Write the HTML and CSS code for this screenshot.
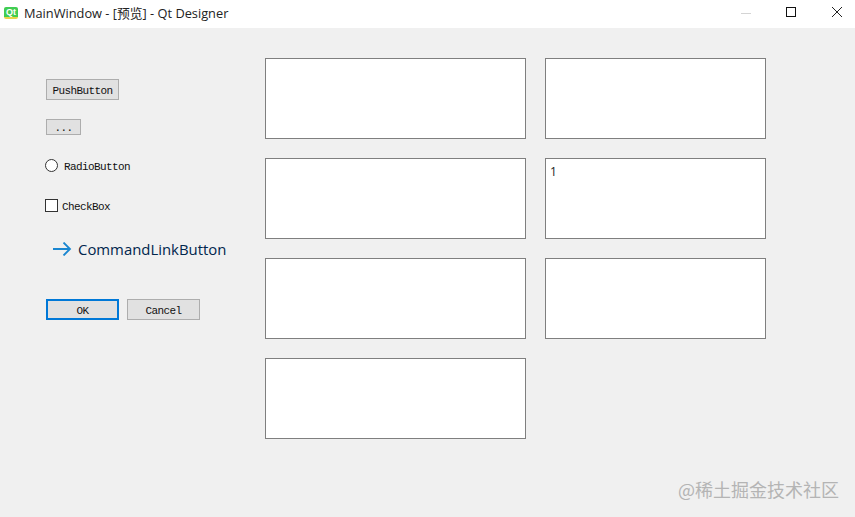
FILE: index.html

```html
<!DOCTYPE html>
<html lang="zh">
<head>
  <meta charset="UTF-8">
  <title>MainWindow - [预览] - Qt Designer</title>
  <meta name="viewport" content="width=device-width, initial-scale=1">
  <link rel="stylesheet" href="styles.css">
</head>
<body>
  <div class="titlebar">
    <div class="app-icon">Qt</div>
    <div class="title">MainWindow - [预览] - Qt Designer</div>
    <div class="win-btns">
      <svg class="win-btn" width="45" height="28" viewBox="0 0 45 28"><path d="M21 13.5h10" stroke="#d4d4d4" fill="none"/></svg>
      <svg class="win-btn" width="45" height="28" viewBox="0 0 45 28"><rect x="21.5" y="7.5" width="9" height="9" stroke="#111" fill="none"/></svg>
      <svg class="win-btn" width="45" height="28" viewBox="0 0 45 28"><path d="M22 7l10 10M32 7L22 17" stroke="#222" fill="none"/></svg>
    </div>
  </div>

  <div class="main">
    <div class="controls">
      <button class="btn push">PushButton</button>
      <button class="btn tool">...</button>
      <div class="opt radio-row"><span class="radio"></span><span class="opt-text">RadioButton</span></div>
      <div class="opt check-row"><span class="check"></span><span class="opt-text">CheckBox</span></div>
      <div class="cmdlink">
        <svg width="19" height="14" viewBox="0 0 19 14"><path d="M0 7h17M10.500 .5l6.500 6.500-6.500 6.500" stroke="#1a86d0" stroke-width="1.8" fill="none"/></svg>
        <span>CommandLinkButton</span>
      </div>
      <div class="dialog-btns">
        <button class="btn default">OK</button>
        <button class="btn">Cancel</button>
      </div>
    </div>

    <div class="boxes">
      <div class="box"></div>
      <div class="box"></div>
      <div class="box"></div>
      <div class="box">1</div>
      <div class="box"></div>
      <div class="box"></div>
      <div class="box"></div>
    </div>
  </div>

  <div class="watermark">@稀土掘金技术社区</div>
</body>
</html>
```

FILE: styles.css

```css
html, body {
  margin: 0;
  padding: 0;
}
body {
  position: relative;
  width: 855px;
  height: 517px;
  overflow: hidden;
  background-color: #f0f0f0;
  font-family: "Liberation Mono", monospace;
}
.titlebar {
  display: flex;
  height: 28px;
  background-color: #fff;
}
.app-icon {
  width: 14px;
  height: 12px;
  margin-top: 7px;
  margin-left: 4px;
  margin-right: 6px;
  border-radius: 2px;
  background: linear-gradient(#41cd52 80%, #e8d44a 80%);
  color: #fff;
  font: bold 9px/10px "Liberation Sans", sans-serif;
  text-align: center;
}
.title {
  padding-top: 3px;
  font: 12.8px "Open Sans", "Noto Sans CJK SC", sans-serif;
  color: #222;
}
.win-btns {
  display: flex;
  margin-left: auto;
}
.win-btn {
  display: block;
}
.main {
  display: flex;
  padding-top: 30px;
}
.controls {
  display: flex;
  flex-direction: column;
  align-items: flex-start;
  box-sizing: border-box;
  width: 265px;
  padding-top: 21px;
  padding-left: 46px;
}
.btn {
  box-sizing: border-box;
  width: 73px;
  height: 21px;
  padding: 2px 0 0;
  background-color: #e1e1e1;
  border: 1px solid #adadad;
  border-radius: 0;
  color: #111;
  font-family: "Liberation Mono", monospace;
  font-size: 11px;
  letter-spacing: -0.6px;
}
.tool {
  width: 35px;
  height: 16px;
  margin-top: 19px;
}
.default {
  border: 2px solid #0078d7;
}
.opt {
  display: flex;
  align-items: center;
  height: 13px;
  margin-left: -1px;
  color: #111;
  font-size: 11px;
  letter-spacing: -0.6px;
}
.opt-text {
  padding-top: 2px;
}
.radio-row {
  margin-top: 24px;
  gap: 6px;
}
.check-row {
  margin-top: 27px;
  gap: 4px;
}
.radio, .check {
  box-sizing: border-box;
  width: 13px;
  height: 13px;
  background-color: #fff;
  border: 1px solid #333;
}
.radio {
  border-radius: 50%;
}
.cmdlink {
  display: flex;
  align-items: center;
  gap: 6px;
  margin-top: 27px;
  margin-left: 7px;
  color: #00264d;
  font: 14.9px "Open Sans", sans-serif;
}
.dialog-btns {
  display: flex;
  gap: 8px;
  margin-top: 40px;
}
.boxes {
  display: grid;
  grid-template-columns: 261px 221px;
  grid-auto-rows: 81px;
  gap: 19px;
}
.box {
  box-sizing: border-box;
  padding: 4px 4px;
  background-color: #fff;
  border: 1px solid #7f7f7f;
  color: #222;
  font: 12px "Open Sans", sans-serif;
}
.watermark {
  position: absolute;
  right: 16px;
  bottom: 15px;
  color: #b4b4b4;
  font: 18px "Noto Sans CJK SC", sans-serif;
}
```
